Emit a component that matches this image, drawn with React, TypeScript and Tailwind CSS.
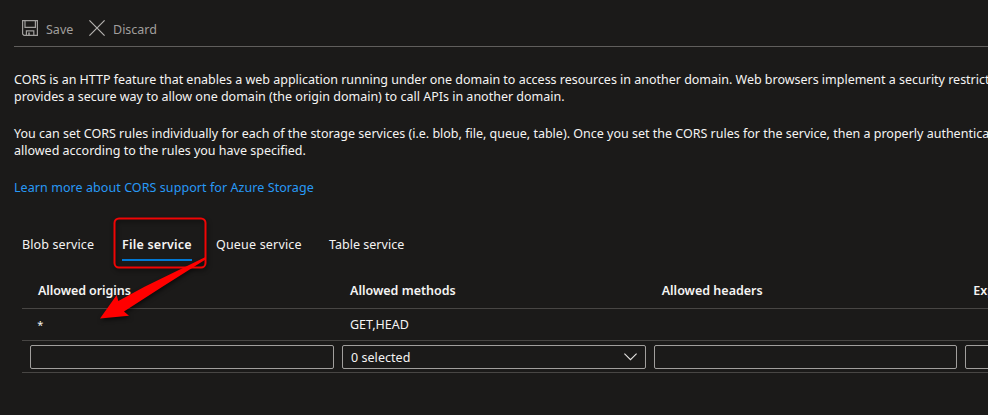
import React from "react";

const tabs = [
  { label: "Blob service", box: "w-[100px]", text: "tracking-[0.12px]" },
  { label: "File service", box: "w-[94px]", text: "font-semibold tracking-[0.22px]", active: true },
  { label: "Queue service", box: "w-[113px]", text: "tracking-[0.18px]" },
  { label: "Table service", box: "w-[100px]", text: "tracking-[0.02px]" },
];

const columns = ["Allowed origins", "Allowed methods", "Allowed headers", "Exposed headers"];
const values = ["*", "GET,HEAD", "", ""];

function SaveIcon() {
  return (
    <svg width="16" height="16" viewBox="0 0 16 16" fill="none" stroke="#a19f9d">
      <path d="M0.6 0.6H15.4V15.4H2L0.6 14Z" strokeWidth="1.2" />
      <path d="M3 1V7.4H13.4V1M4.4 15V10.9H11.8V15" strokeWidth="1.2" />
      <path d="M7 12.5V15" strokeWidth="1.6" />
    </svg>
  );
}

function DiscardIcon() {
  return (
    <svg width="16" height="16" viewBox="0 0 16 16" fill="none" stroke="#b4b2b0" strokeWidth="1.2">
      <path d="M0.4 0.4L15.6 15.6M15.6 0.4L0.4 15.6" />
    </svg>
  );
}

function Chevron() {
  return (
    <svg width="13" height="8" viewBox="0 0 13 8" fill="none" stroke="#e6e4e2" strokeWidth="1.1">
      <path d="M0.4 0.6L6.5 6.7L12.6 0.6" />
    </svg>
  );
}

function Annotation() {
  return (
    <svg className="absolute left-0 top-0 drop-shadow-[1px_2px_2px_rgba(0,0,0,0.6)]" width="240" height="340" viewBox="0 0 240 340">
      <rect x="114.5" y="218.5" width="91" height="49" rx="4.5" fill="none" stroke="#f00505" strokeWidth="2" />
      <path d="M205.5 257L145 286.5L118.3 301L116.7 295L100 318.6L129 315.7L124 311.5L162 287L205.5 259.5Z" fill="#ff0000" />
    </svg>
  );
}

export default function App() {
  return (
    <div className="relative h-[415px] w-[988px] overflow-hidden bg-[#1b1a19] font-['Noto_Sans',sans-serif] text-[12.5px] leading-[17px] text-[#f5f4f3]">
      <div className="ml-[14px] flex h-[47px] items-start border-b border-[#605e5c] pl-2 pt-5 text-[#a19f9d]">
        <SaveIcon />
        <span className="ml-2 mt-[1px] w-[43px]">Save</span>
        <DiscardIcon />
        <span className="ml-2 mt-[1px]">Discard</span>
      </div>
      <div className="ml-[14px] flex flex-col gap-5 whitespace-nowrap pt-6">
        <p>
          <span className="tracking-[-0.015px]">
            CORS is an HTTP feature that enables a web application running under one domain to access resources in another domain. Web browsers implement a security restriction
          </span>
          <br />
          provides a secure way to allow one domain (the origin domain) to call APIs in another domain.
        </p>
        <p>
          You can set CORS rules individually for each of the storage services (i.e. blob, file, queue, table). Once you set the CORS rules for the service, then a properly authenticated
          <br />
          allowed according to the rules you have specified.
        </p>
        <a className="tracking-[0.07px] text-[#2899f5]">Learn more about CORS support for Azure Storage</a>
      </div>
      <div className="ml-[22px] mt-10 flex h-[25px] whitespace-nowrap">
        {tabs.map((t) => (
          <div key={t.label} className={t.box}>
            <div className={t.active ? "h-[25px] w-[70px] border-b-2 border-[#0078d4]" : "h-[25px]"}>
              <span className={t.text}>{t.label}</span>
            </div>
          </div>
        ))}
      </div>
      <div className="ml-[22px] whitespace-nowrap pt-[11px]">
        <div className="flex h-[37px] border-b border-[#484644] pl-[4.3px] pt-2.5 font-semibold">
          {columns.map((c, i) => (
            <div key={c} className={i === 0 ? "w-[311.7px] shrink-0 pl-[11.7px] tracking-[-0.07px]" : "w-[311.7px] shrink-0 pl-3"}>{c}</div>
          ))}
        </div>
        <div className="flex h-8 border-b border-[#484644] pl-[4.3px] pt-[7px]">
          {values.map((v, i) => (
            <div key={i} className={v === "*" ? "w-[311.7px] shrink-0 pl-[11px] text-[11px]" : "w-[311.7px] shrink-0 pl-3"}>{v}</div>
          ))}
        </div>
        <div className="flex h-8 border-b border-[#484644] pl-[4.3px] pt-1">
          {columns.map((c, i) => (
            <div key={c} className="w-[311.7px] shrink-0 px-1">
              <div className="flex h-6 items-center justify-between rounded-[2px] border border-[#a19f9d] pl-2 pr-2">
                {i === 1 && <span className="tracking-[0.05px]">0 selected</span>}
                {i === 1 && <Chevron />}
              </div>
            </div>
          ))}
        </div>
      </div>
      <Annotation />
    </div>
  );
}
